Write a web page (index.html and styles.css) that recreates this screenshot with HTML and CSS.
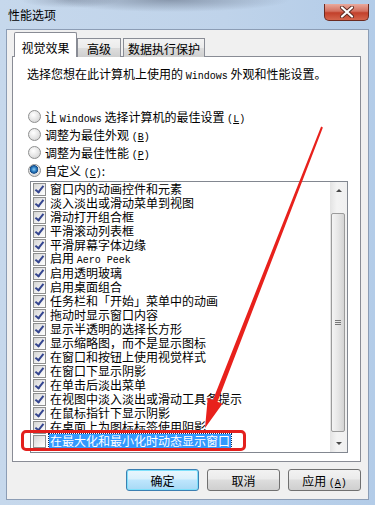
FILE: index.html
```html
<!DOCTYPE html>
<html lang="zh-CN">
<head>
    <meta charset="UTF-8">
    <title>性能选项</title>
    <link rel="stylesheet" href="styles.css">
</head>
<body>
    <div class="window">
        <div class="titlebar">
            <span class="title">性能选项</span>
            <div class="close">
                <svg width="16" height="12" viewBox="0 0 16 12">
                    <path d="M3 1.5 L13 10.5 M13 1.5 L3 10.5" stroke="#5a2a22" stroke-width="4" stroke-linecap="round"/>
                    <path d="M3 1.5 L13 10.5 M13 1.5 L3 10.5" stroke="#ffffff" stroke-width="2.2" stroke-linecap="round"/>
                </svg>
            </div>
        </div>

        <div class="client">
            <div class="tabs">
                <div class="tab active">视觉效果</div>
                <div class="tab tab-adv">高级</div>
                <div class="tab tab-dep">数据执行保护</div>
            </div>

            <div class="panel">
                <p class="desc">选择您想在此计算机上使用的 <span class="mono">Windows</span> 外观和性能设置。</p>

                <div class="radios">
                    <div class="radio-row"><span class="radio"></span><span class="label">让 <span class="mono">Windows</span> 选择计算机的最佳设置 <span class="key">(<u>L</u>)</span></span></div>
                    <div class="radio-row"><span class="radio"></span><span class="label">调整为最佳外观 <span class="key">(<u>B</u>)</span></span></div>
                    <div class="radio-row"><span class="radio"></span><span class="label">调整为最佳性能 <span class="key">(<u>P</u>)</span></span></div>
                    <div class="radio-row"><span class="radio on"></span><span class="label">自定义 <span class="key">(<u>C</u>)</span>:</span></div>
                </div>

                <div class="listbox">
                    <div class="items">
                        <div class="item"><span class="cb on"></span>窗口内的动画控件和元素</div>
                        <div class="item"><span class="cb on"></span>淡入淡出或滑动菜单到视图</div>
                        <div class="item"><span class="cb on"></span>滑动打开组合框</div>
                        <div class="item"><span class="cb on"></span>平滑滚动列表框</div>
                        <div class="item"><span class="cb on"></span>平滑屏幕字体边缘</div>
                        <div class="item"><span class="cb on"></span><span class="label">启用 <span class="mono">Aero Peek</span></span></div>
                        <div class="item"><span class="cb on"></span>启用透明玻璃</div>
                        <div class="item"><span class="cb on"></span>启用桌面组合</div>
                        <div class="item"><span class="cb on"></span>任务栏和「开始」菜单中的动画</div>
                        <div class="item"><span class="cb on"></span>拖动时显示窗口内容</div>
                        <div class="item"><span class="cb on"></span>显示半透明的选择长方形</div>
                        <div class="item"><span class="cb on"></span>显示缩略图，而不是显示图标</div>
                        <div class="item"><span class="cb on"></span>在窗口和按钮上使用视觉样式</div>
                        <div class="item"><span class="cb on"></span>在窗口下显示阴影</div>
                        <div class="item"><span class="cb on"></span>在单击后淡出菜单</div>
                        <div class="item"><span class="cb on"></span>在视图中淡入淡出或滑动工具条提示</div>
                        <div class="item"><span class="cb on"></span>在鼠标指针下显示阴影</div>
                        <div class="item"><span class="cb on"></span>在桌面上为图标标签使用阴影</div>
                        <div class="item"><span class="cb"></span><span class="selected">在最大化和最小化时动态显示窗口</span></div>
                    </div>
                    <div class="scrollbar">
                        <div class="sb-btn"><span class="arrow-up"></span></div>
                        <div class="sb-track">
                            <div class="thumb"><span class="grip"></span></div>
                        </div>
                        <div class="sb-btn"><span class="arrow-down"></span></div>
                    </div>
                </div>
            </div>

            <div class="buttons">
                <button class="btn default">确定</button>
                <button class="btn">取消</button>
                <button class="btn">应用 <span class="key">(<u>A</u>)</span></button>
            </div>
        </div>

        <!-- red annotation drawn over the dialog -->
        <svg class="annotation" width="375" height="505" viewBox="0 0 375 505">
            <polygon points="321.1,126.6 322.9,127.4 217.5,401.8 222.5,403.8 205,428 207.8,397.8 212.9,400" fill="#e8211c"/>
            <rect x="22.5" y="431.5" width="222" height="18" rx="3.5" fill="none" stroke="#e3201d" stroke-width="3"/>
        </svg>
    </div>
</body>
</html>
```

FILE: styles.css
```css
body {
    margin: 0;
    width: 375px;
    height: 505px;
    overflow: hidden;
    font-family: "Noto Sans CJK SC", sans-serif;
    font-size: 12px;
    color: #000;
}
.window {
    position: relative;
    box-sizing: border-box;
    height: 505px;
    padding: 0 6px 5px 6px;
    display: flex;
    flex-direction: column;
    background:
        radial-gradient(ellipse 120px 12px at 170px 0, rgba(70, 80, 100, 0.45), transparent),
        radial-gradient(ellipse 50px 8px at 70px 0, rgba(90, 100, 120, 0.35), transparent),
        linear-gradient(to right, #c6d8ec, #bfd3ea 60%, #b3cce8);
}
.titlebar {
    height: 29px;
    display: flex;
    align-items: flex-start;
}
.title {
    padding-left: 2px;
    line-height: 29px;
}
.close {
    margin-left: auto;
    margin-top: 4px;
    width: 45px;
    height: 17px;
    box-sizing: border-box;
    border: 1px solid #6b2a20;
    border-top: none;
    border-radius: 0 0 5px 5px;
    background: linear-gradient(#e9a99d, #d3705f 45%, #c2402b 55%, #d4654c);
    display: flex;
    align-items: center;
    justify-content: center;
}
.client {
    flex: 1;
    background-color: #f0f0f0;
    border: 1px solid #8c9db5;
    display: flex;
    flex-direction: column;
}
.tabs {
    display: flex;
    align-items: flex-end;
    height: 25px;
    padding: 2px 0 0 7px;
    position: relative;
    z-index: 1;
}
.tab {
    box-sizing: border-box;
    border: 1px solid #898c95;
    border-bottom: none;
    line-height: 14px;
    text-align: center;
    background: linear-gradient(#f3f3f3, #ebebeb 50%, #dddddd 51%, #cfcfcf);
    height: 19px;
    padding-top: 3px;
}
.tab.active {
    width: 63px;
    height: 25px;
    padding-top: 8px;
    background: #fff;
    border-radius: 2px 2px 0 0;
}
.tab-adv {
    width: 44px;
}
.tab-dep {
    width: 82px;
    margin-left: 2px;
}
.panel {
    box-sizing: border-box;
    height: 406px;
    margin: -1px 7px 0 5px;
    border: 1px solid #898c95;
    background-color: #fff;
}
.desc {
    margin: 10px 0 0 14px;
    line-height: 14px;
}
.mono,
.key {
    font-family: "Liberation Mono", monospace;
    font-size: 10px;
}
.label {
    white-space: pre;
}
.radios {
    margin-top: 23px;
    padding-left: 15px;
}
.radio-row {
    height: 18px;
    display: flex;
    align-items: center;
}
.radio {
    width: 11px;
    height: 11px;
    margin-right: 4px;
    border: 1px solid #8e8f8f;
    border-radius: 50%;
    background: radial-gradient(circle at 40% 35%, #ffffff, #e4e4e4 55%, #c9c9c9);
}
.radio.on {
    background: radial-gradient(circle at 45% 40%, #8fd0f5 0, #2a7bc0 2.5px, #144a86 4px, #e4e4e4 4.6px, #cfcfcf);
}
.listbox {
    box-sizing: border-box;
    width: 318px;
    height: 272px;
    margin: 2px 0 0 17px;
    border: 1px solid #828790;
    display: flex;
    overflow: hidden;
}
.items {
    flex: 1;
}
.item {
    height: 14px;
    line-height: 14px;
    display: flex;
    align-items: center;
    padding-left: 2px;
    white-space: pre;
}
.cb {
    position: relative;
    box-sizing: border-box;
    width: 13px;
    height: 13px;
    margin-right: 4px;
    border: 1px solid #8e8f8f;
    background: linear-gradient(135deg, #d6d6d6, #f4f4f4 70%, #ffffff);
    flex-shrink: 0;
}
.cb.on::after {
    content: "";
    position: absolute;
    left: 3px;
    top: 0;
    width: 3px;
    height: 7px;
    border: solid #34458f;
    border-width: 0 2px 2px 0;
    transform: rotate(38deg);
}
.selected {
    background-color: #3399ff;
    color: #fff;
    outline: 1px dotted #0d2d5c;
    padding: 0 1px;
    margin-left: -1px;
}
.scrollbar {
    width: 17px;
    display: flex;
    flex-direction: column;
    background: linear-gradient(to right, #e3e3e3, #f3f3f3 40%, #f0f0f0);
}
.sb-btn {
    height: 17px;
    display: flex;
    align-items: center;
    justify-content: center;
}
.arrow-up {
    border-left: 3px solid transparent;
    border-right: 3px solid transparent;
    border-bottom: 3px solid #4a4a4a;
}
.arrow-down {
    border-left: 3px solid transparent;
    border-right: 3px solid transparent;
    border-top: 3px solid #4a4a4a;
}
.sb-track {
    flex: 1;
    padding: 14px 0 3px;
    display: flex;
}
.thumb {
    flex: 1;
    margin: 0 2px 0 1px;
    border: 1px solid #9b9b9b;
    border-radius: 2px;
    background: linear-gradient(to right, #f4f4f4, #e6e6e6 50%, #d4d4d4);
    display: flex;
    align-items: center;
    justify-content: center;
}
.grip {
    width: 6px;
    height: 5px;
    border-top: 1px solid #777;
    border-bottom: 1px solid #777;
    box-sizing: border-box;
    background: linear-gradient(#777, #777) center / 6px 1px no-repeat;
}
.buttons {
    display: flex;
    justify-content: flex-end;
    gap: 8px;
    margin-top: 7px;
    padding-right: 7px;
}
.btn {
    width: 73px;
    height: 22px;
    box-sizing: border-box;
    border: 1px solid #707070;
    border-radius: 3px;
    background: linear-gradient(#f2f2f2, #ebebeb 45%, #dddddd 50%, #cfcfcf);
    font-family: "Noto Sans CJK SC", sans-serif;
    font-size: 12px;
    padding: 0;
    color: #000;
}
.btn.default {
    border-color: #3c7fb1;
    box-shadow: inset 0 0 0 1px #7ee0fb;
    background: linear-gradient(#eaf6fd, #d9f0fc 45%, #bee6fd 50%, #a7d9f5);
}
.annotation {
    position: absolute;
    left: 0;
    top: 0;
    pointer-events: none;
}
```
